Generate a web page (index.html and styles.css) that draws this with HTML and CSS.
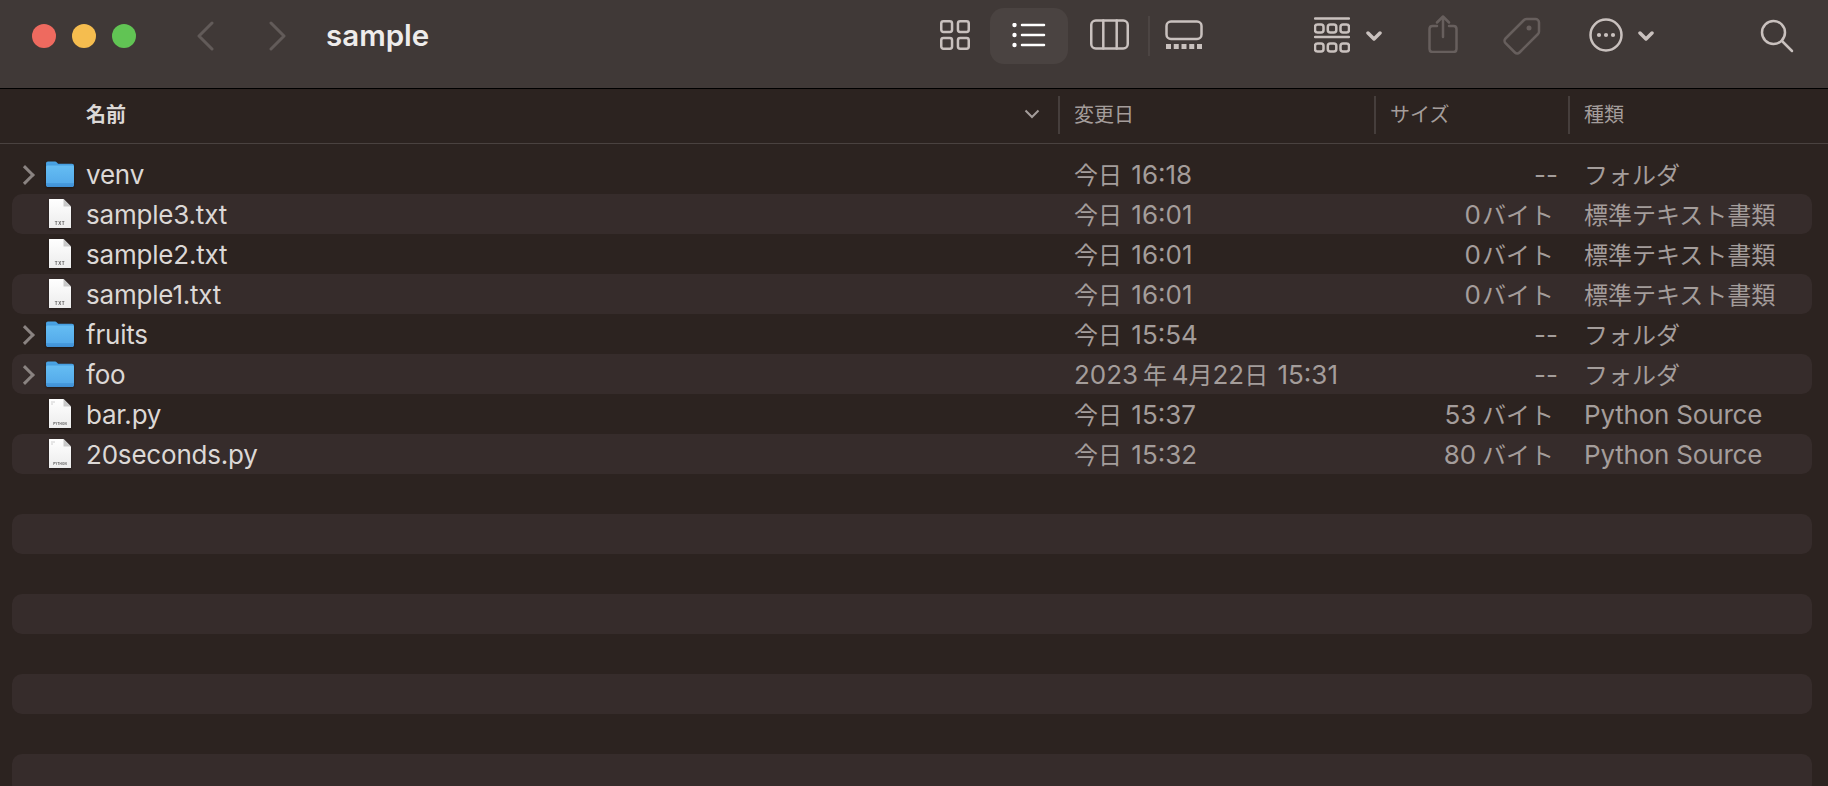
FILE: index.html
```html
<!DOCTYPE html>
<html lang="ja">

<head>
    <meta charset="UTF-8">
    <title>sample</title>
    <link rel="stylesheet" href="styles.css">
</head>

<body>
    <svg class="defs" width="0" height="0">
        <defs>
            <linearGradient id="folderBack" x1="0" y1="0" x2="0" y2="1">
                <stop offset="0" stop-color="#4ba6e6" />
                <stop offset="1" stop-color="#3f93d8" />
            </linearGradient>
            <linearGradient id="folderFront" x1="0" y1="0" x2="0" y2="1">
                <stop offset="0" stop-color="#65bdf3" />
                <stop offset="0.8" stop-color="#55abea" />
                <stop offset="0.8" stop-color="#489cdf" />
                <stop offset="1" stop-color="#3f8fd4" />
            </linearGradient>
            <linearGradient id="paper" x1="0" y1="0" x2="0" y2="1">
                <stop offset="0" stop-color="#ffffff" />
                <stop offset="1" stop-color="#ececec" />
            </linearGradient>
            <symbol id="folder" viewBox="0 0 28 28">
                <path d="M0 3.500C0 2.400.8 1.500 2 1.500h7c.8 0 1.300.3 1.900.9l1.200 1.300H26c1.200 0 2 .8 2 2v4H0z" fill="url(#folderBack)" />
                <path d="M0 7.200c0-.9.7-1.600 1.600-1.600h24.800c.9 0 1.600.7 1.600 1.600v18c0 1.100-.8 1.900-1.900 1.900H1.900C.8 27.100 0 26.300 0 25.200z" fill="url(#folderFront)" />
            </symbol>
            <symbol id="doc-txt" viewBox="0 0 22 30">
                <path d="M0 0h14.500L22 7.500V29H0z" fill="url(#paper)" />
                <path d="M14.500 0L22 7.500h-7.500z" fill="#c9c9c9" />
                <text class="doc-label" x="11" y="26">TXT</text>
            </symbol>
            <symbol id="doc-py" viewBox="0 0 22 30">
                <path d="M0 0h14.500L22 7.500V29H0z" fill="url(#paper)" />
                <path d="M14.500 0L22 7.500h-7.500z" fill="#c9c9c9" />
                <path d="M2 3h4M2 5h2" stroke="#c4c4c4" stroke-width="0.8" />
                <text class="doc-label small" x="11" y="26">PYTHON</text>
            </symbol>
        </defs>
    </svg>

    <header class="toolbar">
        <div class="lights">
            <span class="light red"></span>
            <span class="light yellow"></span>
            <span class="light green"></span>
        </div>
        <div class="nav">
            <svg class="nav-icon" viewBox="0 0 18 30"><path d="M16 2L3 15l13 13" /></svg>
            <svg class="nav-icon" viewBox="0 0 18 30"><path d="M2 2l13 13L2 28" /></svg>
        </div>
        <h1 class="title">sample</h1>

        <div class="views">
            <button class="tool tool-grid">
                <svg class="icon" width="32" height="32" viewBox="0 0 32 32">
                    <rect x="3.250" y="1.250" width="10.800" height="10.800" rx="2.200" />
                    <rect x="19.950" y="1.250" width="10.800" height="10.800" rx="2.200" />
                    <rect x="3.250" y="17.950" width="10.800" height="10.800" rx="2.200" />
                    <rect x="19.950" y="17.950" width="10.800" height="10.800" rx="2.200" />
                </svg>
            </button>
            <button class="tool tool-list active">
                <svg class="icon" width="34" height="26" viewBox="0 0 34 26">
                    <circle class="dot" cx="2.500" cy="2" r="2.200" />
                    <circle class="dot" cx="2.500" cy="12" r="2.200" />
                    <circle class="dot" cx="2.500" cy="22" r="2.200" />
                    <path class="white" d="M10 2h22M10 12h22M10 22h22" />
                </svg>
            </button>
            <button class="tool tool-columns">
                <svg class="icon" width="40" height="32" viewBox="0 0 40 32">
                    <rect x="2.250" y="1.500" width="36.500" height="28" rx="4.500" />
                    <path d="M14.300 1.500v28M27.700 1.500v28" />
                </svg>
            </button>
            <span class="tool-sep"></span>
            <button class="tool tool-gallery">
                <svg class="icon" width="38" height="30" viewBox="0 0 38 30">
                    <rect x="1.500" y="1.500" width="35" height="17.500" rx="4.500" />
                    <path class="dash" d="M1 26.500h36" />
                </svg>
            </button>
        </div>

        <div class="actions">
            <button class="tool tool-group">
                <svg class="icon" width="36" height="36" viewBox="0 0 36 36">
                    <path d="M1 1.500h34M1 20h34" />
                    <rect x="1" y="7.500" width="8.500" height="8" rx="2.500" />
                    <rect x="13.800" y="7.500" width="8.500" height="8" rx="2.500" />
                    <rect x="26.500" y="7.500" width="8.500" height="8" rx="2.500" />
                    <rect x="1" y="26.500" width="8.500" height="8" rx="2.500" />
                    <rect x="13.800" y="26.500" width="8.500" height="8" rx="2.500" />
                    <rect x="26.500" y="26.500" width="8.500" height="8" rx="2.500" />
                </svg>
                <svg class="icon chev" width="16" height="10" viewBox="0 0 16 10"><path d="M2 2l6 6 6-6" /></svg>
            </button>
            <button class="tool tool-share">
                <svg class="icon dim" width="30" height="38" viewBox="0 0 30 38">
                    <path d="M9 11H4.500C2.800 11 1.500 12.300 1.500 14v20c0 1.700 1.300 3 3 3h21c1.700 0 3-1.300 3-3V14c0-1.700-1.300-3-3-3H21" />
                    <path d="M15 22V2M9 7.500L15 1.500 21 7.500" />
                </svg>
            </button>
            <button class="tool tool-tag">
                <svg class="icon dim" width="38" height="38" viewBox="0 0 38 38">
                    <path d="M2.500 21.500L21 3c.7-.7 1.500-1 2.500-1h9c1.900 0 3.500 1.600 3.500 3.500v9c0 1-.3 1.800-1 2.500L16.500 35.500c-1.300 1.300-3.300 1.300-4.600 0l-9.400-9.400c-1.300-1.300-1.300-3.300 0-4.600z" />
                    <circle class="fill" cx="26" cy="11" r="2.500" />
                </svg>
            </button>
            <button class="tool tool-more">
                <svg class="icon" width="34" height="34" viewBox="0 0 34 34">
                    <circle cx="17" cy="17" r="15.500" />
                    <circle class="fill" cx="10" cy="17" r="2.100" />
                    <circle class="fill" cx="17" cy="17" r="2.100" />
                    <circle class="fill" cx="24" cy="17" r="2.100" />
                </svg>
                <svg class="icon chev" width="16" height="10" viewBox="0 0 16 10"><path d="M2 2l6 6 6-6" /></svg>
            </button>
            <button class="tool tool-search">
                <svg class="icon" width="34" height="34" viewBox="0 0 34 34">
                    <circle cx="13.500" cy="13.500" r="11.500" />
                    <path d="M22 22l10 10" />
                </svg>
            </button>
        </div>
    </header>

    <div class="list-header">
        <div class="head head-name">
            <span>名前</span>
            <svg class="sort" width="16" height="10" viewBox="0 0 16 10"><path d="M1.500 1.500L8 8l6.500-6.500" /></svg>
        </div>
        <div class="head">変更日</div>
        <div class="head">サイズ</div>
        <div class="head">種類</div>
    </div>

    <div class="rows">
        <div class="row">
            <div class="name"><span class="disclosure"></span><svg class="file-icon"><use href="#folder" /></svg>venv</div>
            <div class="date"><span class="ja">今日</span> 16:18</div>
            <div class="size empty">--</div>
            <div class="kind"><span class="ja">フォルダ</span></div>
        </div>
        <div class="row">
            <div class="name"><span class="no-disclosure"></span><svg class="file-icon doc"><use href="#doc-txt" /></svg>sample3.txt</div>
            <div class="date"><span class="ja">今日</span> 16:01</div>
            <div class="size">0<span class="ja">バイト</span></div>
            <div class="kind"><span class="ja">標準テキスト書類</span></div>
        </div>
        <div class="row">
            <div class="name"><span class="no-disclosure"></span><svg class="file-icon doc"><use href="#doc-txt" /></svg>sample2.txt</div>
            <div class="date"><span class="ja">今日</span> 16:01</div>
            <div class="size">0<span class="ja">バイト</span></div>
            <div class="kind"><span class="ja">標準テキスト書類</span></div>
        </div>
        <div class="row">
            <div class="name"><span class="no-disclosure"></span><svg class="file-icon doc"><use href="#doc-txt" /></svg>sample1.txt</div>
            <div class="date"><span class="ja">今日</span> 16:01</div>
            <div class="size">0<span class="ja">バイト</span></div>
            <div class="kind"><span class="ja">標準テキスト書類</span></div>
        </div>
        <div class="row">
            <div class="name"><span class="disclosure"></span><svg class="file-icon"><use href="#folder" /></svg>fruits</div>
            <div class="date"><span class="ja">今日</span> 15:54</div>
            <div class="size empty">--</div>
            <div class="kind"><span class="ja">フォルダ</span></div>
        </div>
        <div class="row">
            <div class="name"><span class="disclosure"></span><svg class="file-icon"><use href="#folder" /></svg>foo</div>
            <div class="date">2023&thinsp;<span class="ja">年</span>&thinsp;4<span class="ja">月</span>22<span class="ja">日</span> 15:31</div>
            <div class="size empty">--</div>
            <div class="kind"><span class="ja">フォルダ</span></div>
        </div>
        <div class="row">
            <div class="name"><span class="no-disclosure"></span><svg class="file-icon doc"><use href="#doc-py" /></svg>bar.py</div>
            <div class="date"><span class="ja">今日</span> 15:37</div>
            <div class="size">53&thinsp;<span class="ja">バイト</span></div>
            <div class="kind">Python Source</div>
        </div>
        <div class="row">
            <div class="name"><span class="no-disclosure"></span><svg class="file-icon doc"><use href="#doc-py" /></svg>20seconds.py</div>
            <div class="date"><span class="ja">今日</span> 15:32</div>
            <div class="size">80&thinsp;<span class="ja">バイト</span></div>
            <div class="kind">Python Source</div>
        </div>
        <div class="row"></div>
        <div class="row"></div>
        <div class="row"></div>
        <div class="row"></div>
        <div class="row"></div>
        <div class="row"></div>
        <div class="row"></div>
        <div class="row"></div>
    </div>
</body>

</html>
```

FILE: styles.css
```css
:root {
    --toolbar-color: #403937;
    --list-color: #2c2320;
    --stripe-color: #362c2b;
    --icon-color: #c9c1be;
    --dim-color: #675f5d;
    --name-color: #dcd8d6;
    --meta-color: #a49d9b;
    --columns: 1047px 316px 194px 1fr;
}

* {
    margin: 0;
    padding: 0;
    box-sizing: border-box;
}

html,
body {
    height: 786px;
    overflow: hidden;
}

body {
    font-family: Inter, "Noto Sans CJK JP", sans-serif;
    background-color: var(--list-color);
    color: var(--name-color);
}

.defs {
    position: absolute;
}

.toolbar {
    display: flex;
    align-items: center;
    height: 89px;
    padding: 0 0 17px 32px;
    background-color: var(--toolbar-color);
    border-bottom: 1px solid #000000;
}

.lights {
    display: flex;
    gap: 16px;
}

.light {
    width: 24px;
    height: 24px;
    border-radius: 50%;
}

.red {
    background-color: #ee6a5f;
}

.yellow {
    background-color: #f5bd4f;
}

.green {
    background-color: #61c454;
}

.nav {
    display: flex;
    gap: 55px;
    margin-left: 60px;
}

.nav-icon {
    width: 18px;
    height: 30px;
    fill: none;
    stroke: #625b59;
    stroke-width: 3;
    stroke-linecap: round;
    stroke-linejoin: round;
}

.title {
    width: 110px;
    margin-left: 39px;
    padding-bottom: 2px;
    font-size: 29.500px;
    font-weight: 600;
    color: #eeeceb;
}

.tool {
    display: flex;
    align-items: center;
    justify-content: center;
    background: none;
    border: none;
}

.icon {
    fill: none;
    stroke: var(--icon-color);
    stroke-width: 2.500;
    stroke-linecap: round;
    stroke-linejoin: round;
}

.icon.dim {
    stroke: var(--dim-color);
}

.icon .fill {
    fill: var(--icon-color);
    stroke: none;
}

.icon.dim .fill {
    fill: var(--dim-color);
}

.icon .dot {
    fill: #ffffff;
    stroke: none;
}

.icon .white {
    stroke: #ffffff;
}

.icon .dash {
    stroke-width: 5;
    stroke-dasharray: 5 2.750;
    stroke-linecap: butt;
}

.chev {
    margin-top: 2px;
    stroke-width: 3.500;
}

.views {
    display: flex;
    align-items: center;
    margin-left: 492px;
}

.tool-grid {
    width: 52px;
}

.tool-list {
    width: 78px;
    height: 56px;
    margin-left: 10px;
    margin-right: 19px;
    border-radius: 14px;
    background-color: #4a4341;
}

.tool-columns {
    width: 44px;
    margin-bottom: 2px;
}

.tool-sep {
    width: 2px;
    height: 40px;
    margin: 0 14px 0 17px;
    background-color: #4c4543;
}

.tool-gallery {
    width: 40px;
    margin-bottom: 2px;
}

.actions {
    display: flex;
    align-items: center;
    margin-left: 110px;
}

.tool-group {
    gap: 16px;
    margin-bottom: 2px;
}

.tool-share {
    margin-left: 46px;
    margin-bottom: 4px;
}

.tool-tag {
    margin-left: 45px;
}

.tool-more {
    margin-left: 48px;
    margin-bottom: 2px;
    gap: 15px;
}

.tool-search {
    margin-left: 106px;
}

.list-header {
    display: grid;
    grid-template-columns: var(--columns);
    align-items: center;
    height: 55px;
    padding: 0 16px 2px 12px;
    border-bottom: 1px solid #4a4240;
}

.head {
    display: flex;
    align-items: center;
    height: 38px;
    margin-left: -1px;
    padding: 0 0 3px 14px;
    border-left: 2px solid #463e3c;
    font-size: 20px;
    color: var(--meta-color);
}

.head-name {
    justify-content: space-between;
    margin-left: 0;
    padding: 0 19px 3px 74px;
    border-left: 0;
    font-weight: 600;
    color: var(--name-color);
}

.sort {
    fill: none;
    stroke: var(--meta-color);
    stroke-width: 2;
}

.rows {
    padding: 10px 16px 0 12px;
}

.row {
    display: grid;
    grid-template-columns: var(--columns);
    align-items: center;
    height: 40px;
    padding-top: 2px;
    border-radius: 10px;
    font-size: 26px;
    line-height: 32px;
    color: var(--meta-color);
}

.row:nth-child(even) {
    background-color: var(--stripe-color);
}

.ja {
    font-size: 24px;
}

.name {
    display: flex;
    align-items: center;
    letter-spacing: -0.2px;
    color: var(--name-color);
}

.disclosure,
.no-disclosure {
    width: 34px;
    height: 38px;
    flex-shrink: 0;
}

.disclosure {
    position: relative;
}

.disclosure::after {
    content: "";
    position: absolute;
    left: 6px;
    top: 12px;
    width: 11px;
    height: 11px;
    border-top: 3px solid #8a8381;
    border-right: 3px solid #8a8381;
    transform: rotate(45deg);
}

.file-icon {
    width: 28px;
    height: 28px;
    margin-right: 12px;
    margin-bottom: 2px;
    flex-shrink: 0;
    filter: drop-shadow(0 1px 1px rgba(0, 0, 0, 0.4));
}

.file-icon.doc {
    height: 30px;
}

.doc-label {
    font-family: "Liberation Sans", sans-serif;
    font-size: 4.500px;
    font-weight: 700;
    letter-spacing: 0.6px;
    text-anchor: middle;
    fill: #555555;
}

.doc-label.small {
    font-size: 3px;
    letter-spacing: 0.2px;
}

.date {
    padding-left: 15px;
    word-spacing: 2px;
}

.size {
    padding-right: 15px;
    text-align: right;
}

.size.empty {
    padding-right: 11px;
}

.size .ja {
    margin-left: 1px;
}

.kind {
    padding-left: 15px;
    letter-spacing: -0.2px;
}

.kind .ja {
    letter-spacing: 0;
}
```
